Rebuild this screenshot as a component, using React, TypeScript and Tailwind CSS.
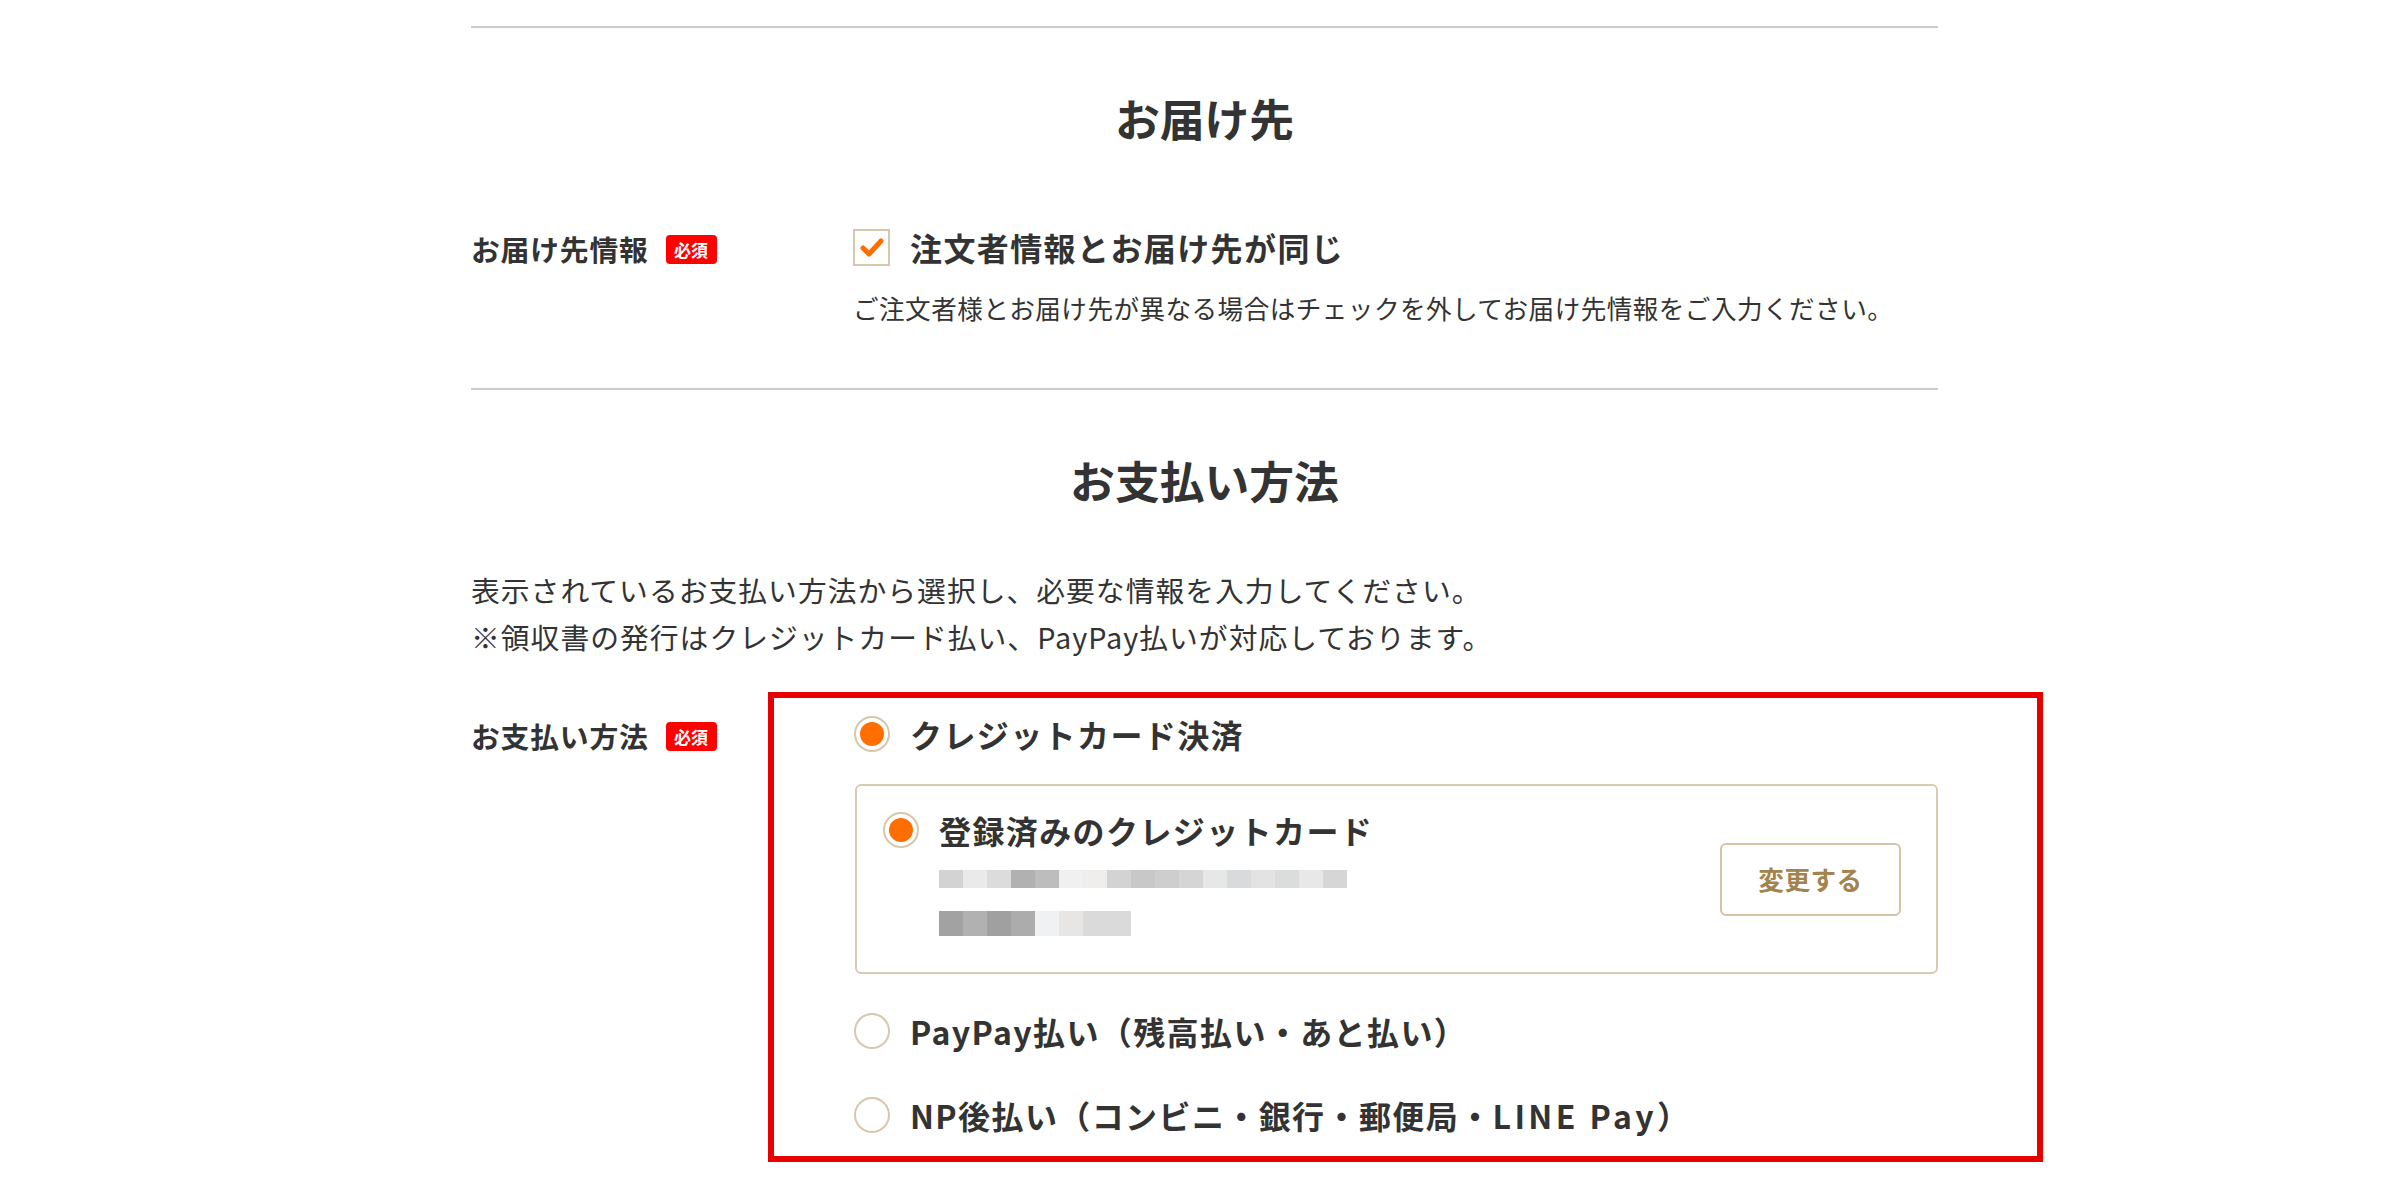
import React from "react";

const row1 = ["#d3d3d3", "#eaeaea", "#dcdcdc", "#b1b1b1", "#bdbdbd", "#eef0f1", "#efeeec", "#d3d3d3", "#c8c8c8", "#cecece", "#d5d5d5", "#e6e7e7", "#d9dadc", "#e3e3e3", "#dbdcdc", "#e8e8e8", "#d6d6d6"];
const row2 = ["#a2a2a2", "#b1b1b1", "#a0a0a0", "#abacab", "#f0f1f2", "#e8e6e4", "#dadada", "#dadada"];

function Badge() {
  return (
    <span className="ml-[17px] inline-flex h-[29px] w-[51px] items-center justify-center rounded-[4px] bg-[#ff0000] text-[17px] font-bold leading-none text-white">
      必須
    </span>
  );
}

function Radio({ checked }: { checked?: boolean }) {
  return (
    <span className="flex h-[36px] w-[36px] shrink-0 items-center justify-center rounded-full border-2 border-[#d7c8ab] bg-white">
      {checked && <span className="h-[24px] w-[24px] rounded-full bg-[#ff6e00]" />}
    </span>
  );
}

function Blocks({ colors, h }: { colors: string[]; h: string }) {
  return (
    <div className={`flex ${h}`}>
      {colors.map((c, i) => (
        <span key={i} className="h-full w-[24px]" style={{ backgroundColor: c }} />
      ))}
    </div>
  );
}

export default function App() {
  return (
    <div className="min-h-screen w-full bg-white font-['Noto_Sans_CJK_JP','Noto_Sans',sans-serif] text-[#333333]">
      <div className="ml-[471px] w-[1467px] pt-[26px] pb-[60px]">
        <div className="h-[2px] w-full bg-[#cccccc]" />
        <h2 className="mt-[56px] text-center text-[44.8px] font-bold leading-[67px]">お届け先</h2>

        <div className="mt-[72px] flex">
          <div className="flex h-[48px] w-[382px] shrink-0 items-center pt-[4px]">
            <span className="text-[28.8px] font-bold leading-none tracking-[0.8px]">お届け先情報</span>
            <Badge />
          </div>
          <div className="flex-1">
            <div className="flex h-[48px] items-center gap-[20px]">
              <span className="flex h-[37px] w-[37px] shrink-0 items-center justify-center border-2 border-[#d7c8ab] bg-white">
                <svg width="26" height="22" viewBox="0 0 26 22">
                  <path d="M4 12 L10 18 L22 5" fill="none" stroke="#ff6e00" strokeWidth="5" strokeLinecap="round" strokeLinejoin="round" />
                </svg>
              </span>
              <span className="text-[32px] font-bold leading-none tracking-[1.4px]">注文者情報とお届け先が同じ</span>
            </div>
            <p className="mt-[16px] text-[25.6px] leading-[41px] tracking-[0.45px]">
              ご注文者様とお届け先が異なる場合はチェックを外してお届け先情報をご入力ください。
            </p>
          </div>
        </div>

        <div className="mt-[60px] h-[2px] w-full bg-[#cccccc]" />
        <h2 className="mt-[56px] text-center text-[44.8px] font-bold leading-[67px]">お支払い方法</h2>

        <p className="mt-[53px] text-[28.8px] leading-[47px] tracking-[1px]">
          表示されているお支払い方法から選択し、必要な情報を入力してください。
          <br />
          ※領収書の発行はクレジットカード払い、PayPay払いが対応しております。
        </p>

        <div className="mt-[50px] flex">
          <div className="flex h-[48px] w-[382px] shrink-0 items-center pt-[4px]">
            <span className="text-[28.8px] font-bold leading-none tracking-[0.8px]">お支払い方法</span>
            <Badge />
          </div>
          <div className="relative flex-1">
            <div className="pointer-events-none absolute -top-[18px] -right-[105px] -bottom-[23px] -left-[85px] border-[6px] border-[#e60000]" />

            <div className="flex h-[48px] items-center gap-[20px] pl-[1px]">
              <Radio checked />
              <span className="text-[32px] font-bold leading-none tracking-[1.4px]">クレジットカード決済</span>
            </div>

            <div className="mt-[26px] ml-[2px] flex h-[190px] items-center justify-between rounded-[6px] border-2 border-[#d7cbb1] pr-[35px] pl-[26px]">
              <div className="flex h-full flex-col pt-[20px]">
                <div className="flex h-[48px] items-center gap-[20px]">
                  <Radio checked />
                  <span className="text-[32px] font-bold leading-none tracking-[1.4px]">登録済みのクレジットカード</span>
                </div>
                <div className="mt-[16px] pl-[56px]">
                  <Blocks colors={row1} h="h-[18px]" />
                  <div className="h-[23px]" />
                  <Blocks colors={row2} h="h-[25px]" />
                </div>
              </div>
              <button className="flex h-[73px] w-[181px] items-center justify-center rounded-[6px] border-2 border-[#d4c4a5] bg-white text-[25.6px] font-bold tracking-[0.5px] text-[#a3844e]">
                変更する
              </button>
            </div>

            <div className="mt-[33px] flex h-[48px] items-center gap-[20px] pl-[1px]">
              <Radio />
              <span className="text-[32px] font-bold leading-none tracking-[1.4px]">PayPay払い（残高払い・あと払い）</span>
            </div>
            <div className="mt-[36px] flex h-[48px] items-center gap-[20px] pl-[1px]">
              <Radio />
              <span className="text-[32px] font-bold leading-none tracking-[1.4px]">
                NP後払い（コンビニ・銀行・郵便局・<span className="tracking-[3.4px]">LINE Pay</span>）
              </span>
            </div>
          </div>
        </div>
      </div>
    </div>
  );
}
